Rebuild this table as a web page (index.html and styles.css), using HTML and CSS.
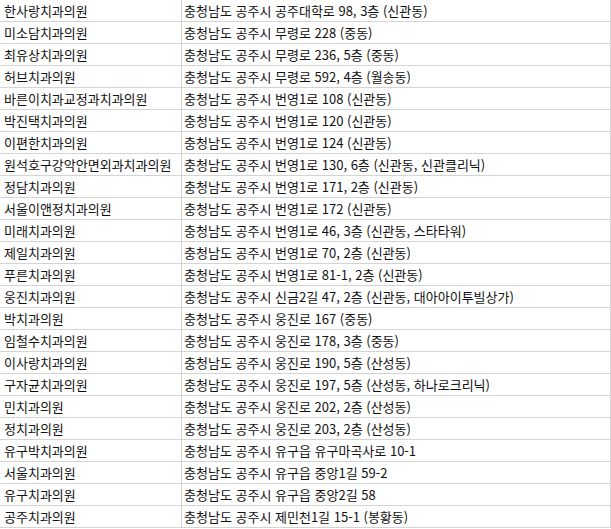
FILE: index.html
```html
<!DOCTYPE html>
<html lang="ko">
<head>
<meta charset="utf-8">
<link rel="stylesheet" href="styles.css">
</head>
<body>
<table class="list">
<tbody>
<tr><td class="name">한사랑치과의원</td><td class="addr">충청남도 공주시 공주대학로 98, 3층 (신관동)</td></tr>
<tr><td class="name">미소담치과의원</td><td class="addr">충청남도 공주시 무령로 228 (중동)</td></tr>
<tr><td class="name">최유상치과의원</td><td class="addr">충청남도 공주시 무령로 236, 5층 (중동)</td></tr>
<tr><td class="name">허브치과의원</td><td class="addr">충청남도 공주시 무령로 592, 4층 (월송동)</td></tr>
<tr><td class="name">바른이치과교정과치과의원</td><td class="addr">충청남도 공주시 번영1로 108 (신관동)</td></tr>
<tr><td class="name">박진택치과의원</td><td class="addr">충청남도 공주시 번영1로 120 (신관동)</td></tr>
<tr><td class="name">이편한치과의원</td><td class="addr">충청남도 공주시 번영1로 124 (신관동)</td></tr>
<tr><td class="name">원석호구강악안면외과치과의원</td><td class="addr">충청남도 공주시 번영1로 130, 6층 (신관동, 신관클리닉)</td></tr>
<tr><td class="name">정담치과의원</td><td class="addr">충청남도 공주시 번영1로 171, 2층 (신관동)</td></tr>
<tr><td class="name">서울이앤정치과의원</td><td class="addr">충청남도 공주시 번영1로 172 (신관동)</td></tr>
<tr><td class="name">미래치과의원</td><td class="addr">충청남도 공주시 번영1로 46, 3층 (신관동, 스타타워)</td></tr>
<tr><td class="name">제일치과의원</td><td class="addr">충청남도 공주시 번영1로 70, 2층 (신관동)</td></tr>
<tr><td class="name">푸른치과의원</td><td class="addr">충청남도 공주시 번영1로 81-1, 2층 (신관동)</td></tr>
<tr><td class="name">웅진치과의원</td><td class="addr">충청남도 공주시 신금2길 47, 2층 (신관동, 대아아이투빌상가)</td></tr>
<tr><td class="name">박치과의원</td><td class="addr">충청남도 공주시 웅진로 167 (중동)</td></tr>
<tr><td class="name">임철수치과의원</td><td class="addr">충청남도 공주시 웅진로 178, 3층 (중동)</td></tr>
<tr><td class="name">이사랑치과의원</td><td class="addr">충청남도 공주시 웅진로 190, 5층 (산성동)</td></tr>
<tr><td class="name">구자균치과의원</td><td class="addr">충청남도 공주시 웅진로 197, 5층 (산성동, 하나로크리닉)</td></tr>
<tr><td class="name">민치과의원</td><td class="addr">충청남도 공주시 웅진로 202, 2층 (산성동)</td></tr>
<tr><td class="name">정치과의원</td><td class="addr">충청남도 공주시 웅진로 203, 2층 (산성동)</td></tr>
<tr><td class="name">유구박치과의원</td><td class="addr">충청남도 공주시 유구읍 유구마곡사로 10-1</td></tr>
<tr><td class="name">서울치과의원</td><td class="addr">충청남도 공주시 유구읍 중앙1길 59-2</td></tr>
<tr><td class="name">유구치과의원</td><td class="addr">충청남도 공주시 유구읍 중앙2길 58</td></tr>
<tr><td class="name">공주치과의원</td><td class="addr">충청남도 공주시 제민천1길 15-1 (봉황동)</td></tr>
</tbody>
</table>
</body>
</html>
```

FILE: styles.css
```css
html, body {
  margin: 0;
  padding: 0;
  background: #ffffff;
}

.list {
  border-collapse: separate;
  border-spacing: 0;
  width: 611px;
  table-layout: fixed;
  font-family: "Noto Sans CJK KR", "Noto Sans", sans-serif;
  font-size: 13px;
  color: #111111;
}

.list td {
  height: 21px;
  line-height: 21px;
  border-bottom: 1px solid #d4d4d4;
  border-right: 1px solid #d4d4d4;
  white-space: nowrap;
  overflow: hidden;
  box-sizing: content-box;
  vertical-align: middle;
}

.list .name {
  width: 177px;
  padding: 0 0 0 4px;
}

.list .addr {
  width: 426px;
  padding: 0 0 0 2px;
}
```
